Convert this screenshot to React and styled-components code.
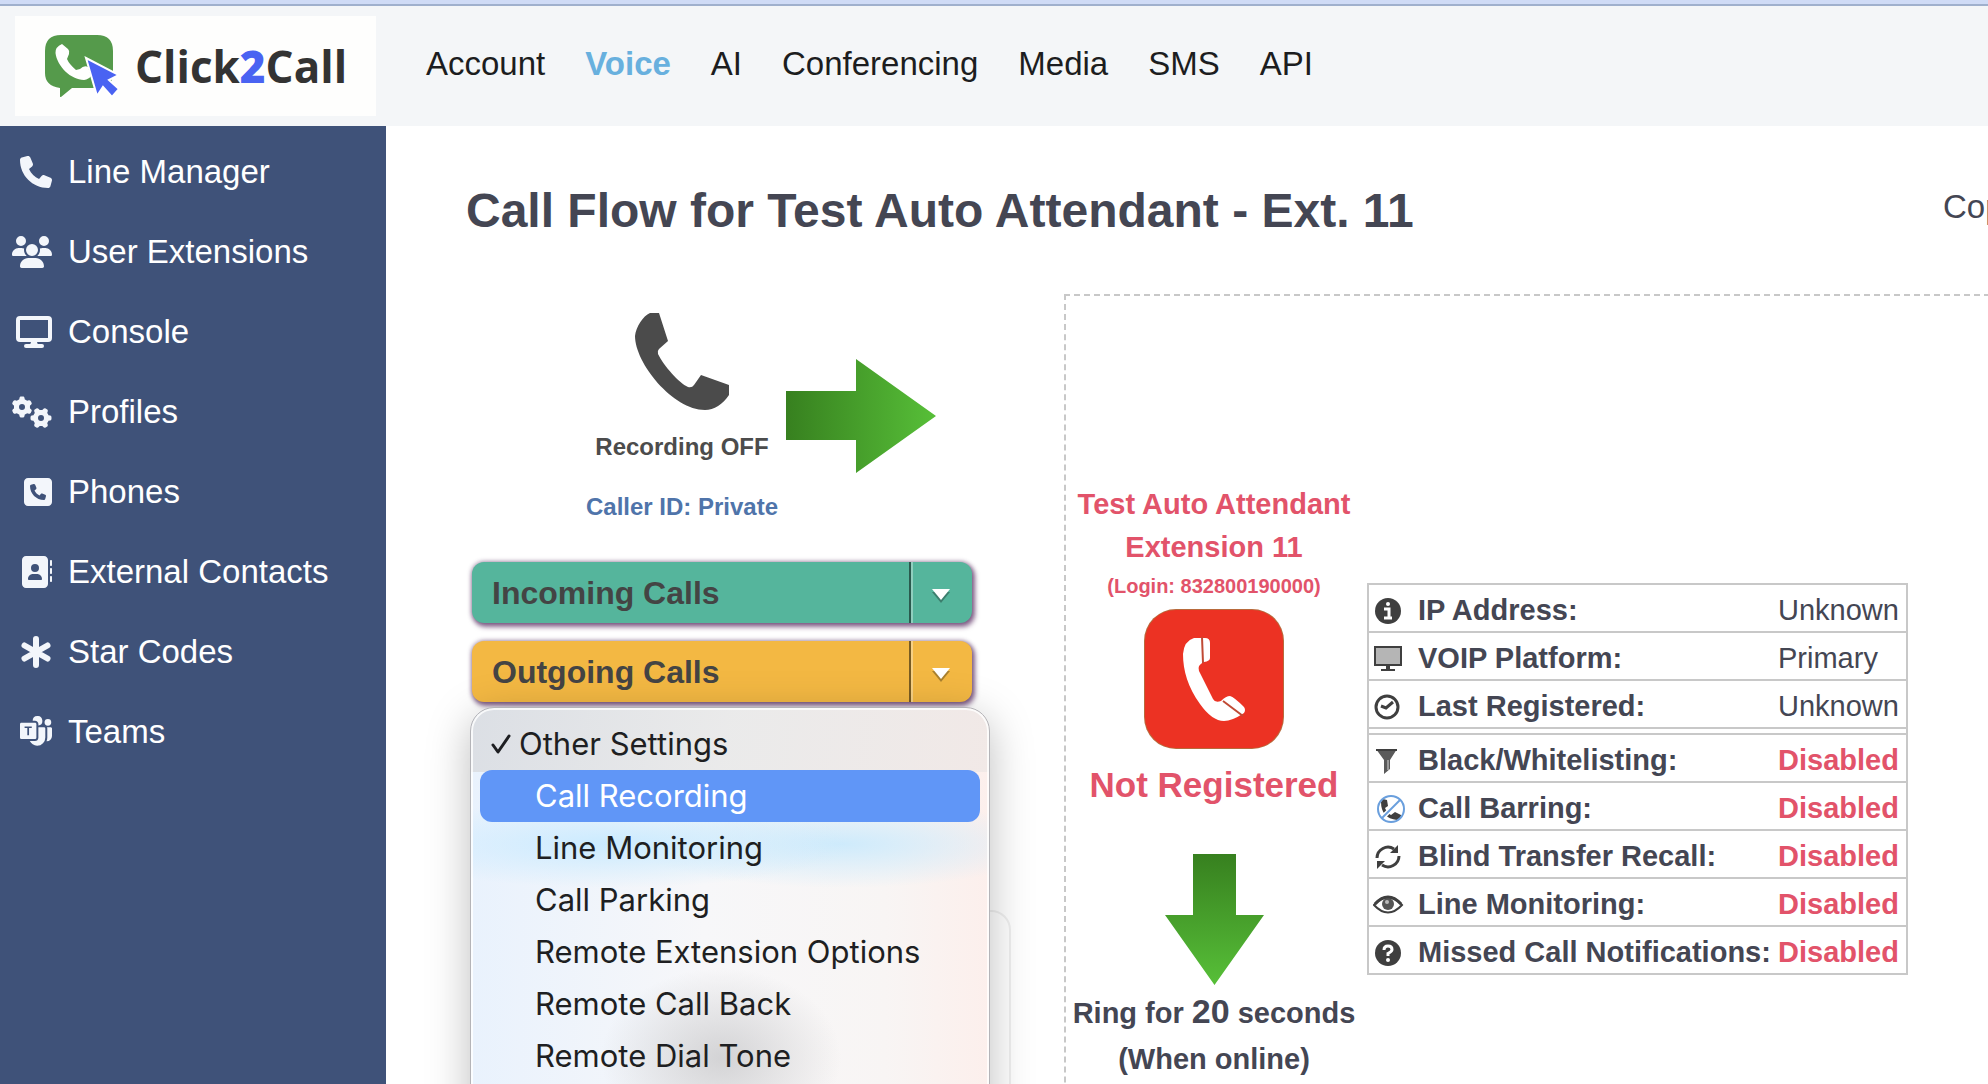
import styled, { createGlobalStyle } from "styled-components";
import {
  FaPhone,
  FaUsers,
  FaGears,
  FaSquarePhone,
  FaAddressBook,
} from "react-icons/fa6";
import { BsMicrosoftTeams } from "react-icons/bs";

const GlobalStyle = createGlobalStyle`
  * {
    box-sizing: border-box;
  }
  body {
    margin: 0;
    background: #fff;
    color: #444653;
    font-family: "Helvetica Neue", "Liberation Sans", Arial, sans-serif;
    font-size: 29px;
    line-height: 46px;
  }
`;

const Page = styled.div`
  height: 100vh;
  overflow: hidden;
  display: flex;
  flex-direction: column;
  border-top: 4px solid #cfdbf6;
`;

const Header = styled.header`
  flex: none;
  display: flex;
  align-items: center;
  height: 122px;
  padding-left: 15px;
  border-top: 2px solid #9fb0cd;
  background: #f4f6f8;
`;

const Logo = styled.a`
  display: flex;
  align-items: center;
  gap: 16px;
  width: 361px;
  height: 100px;
  padding-left: 30px;
  background: #fefefd;
  color: #333;
  font: bold 44px/50px "Open Sans", "Noto Sans", sans-serif;
  text-decoration: none;

  b {
    color: #4a63f2;
  }
`;

const TopNav = styled.nav`
  display: flex;
  gap: 40px;
  padding: 0 0 4px 50px;
`;

const TopLink = styled.a`
  color: ${({ $active }) => ($active ? "#68b0de" : "#1c1d20")};
  font-size: 33px;
  font-weight: ${({ $active }) => ($active ? "bold" : "normal")};
  text-decoration: none;
`;

const Body = styled.div`
  flex: 1;
  display: flex;
  min-height: 0;
`;

const Sidebar = styled.nav`
  flex: none;
  width: 386px;
  padding-top: 6px;
  background: #3f5279;
`;

const SideLink = styled.a`
  display: flex;
  align-items: center;
  gap: 16px;
  height: 80px;
  color: #fff;
  font-size: 33px;
  text-decoration: none;
`;

const SideIcon = styled.span`
  display: flex;
  justify-content: flex-end;
  width: 52px;
  color: #f3f6fb;

  svg {
    width: ${({ $width }) => $width}px;
    height: 32px;
  }
`;

const Main = styled.main`
  flex: none;
  width: 1634px;
  padding-left: 80px;
`;

const TitleBar = styled.div`
  display: flex;
  align-items: flex-start;
  justify-content: space-between;
  padding: 56px 0 54px;
`;

const Title = styled.h1`
  margin: 0;
  font-size: 48px;
  line-height: 58px;
`;

const CopyLink = styled.a`
  color: #444653;
  font-size: 33px;
  line-height: 50px;
  text-decoration: none;
`;

const Flow = styled.div`
  display: grid;
  grid-template-columns: 598px 1fr;
`;

const CallerColumn = styled.section`
  padding: 19px 0 0 6px;
`;

const Caller = styled.div`
  display: flex;
  align-items: flex-start;
  height: 249px;
  padding-left: 106px;
`;

const CallerInfo = styled.div`
  width: 208px;
  text-align: center;
  font-size: 24px;
  font-weight: bold;
  line-height: 34px;
  white-space: nowrap;
  color: #4c4c4c;

  svg {
    display: block;
    margin: 0 auto 20px;
  }
`;

const CallerId = styled.div`
  margin-top: 26px;
  color: #4f74aa;
`;

const CallerArrow = styled.svg`
  margin-top: 46px;
`;

const Settings = styled.div`
  position: relative;
  display: flex;
  flex-direction: column;
  gap: 18px;
  width: 500px;
`;

const SelectBox = styled.label`
  display: flex;
  height: 61px;
  border-radius: 12px;
  background: ${({ $color }) => $color};
  box-shadow: 2px 3px 5px 1px rgba(70, 20, 80, 0.6),
    0 0 4px 1px rgba(70, 30, 80, 0.35);
  position: relative;

  svg {
    position: absolute;
    right: 20px;
    top: 26px;
    pointer-events: none;
  }
`;

const Select = styled.select`
  flex: 1;
  appearance: none;
  border: 0;
  padding: 0 62px 0 20px;
  border-radius: 12px;
  color: #444;
  font: bold 32px "Liberation Sans", Arial, sans-serif;
  background: linear-gradient(
      to right,
      rgba(0, 0, 0, 0.5) 2px,
      rgba(255, 255, 255, 0.35) 2px
    )
    right 59px top / 4px 100% no-repeat;
`;

const Menu = styled.ul`
  position: absolute;
  top: 145px;
  left: -2px;
  z-index: 1;
  width: 520px;
  height: 460px;
  margin: 0;
  padding: 10px 9px;
  list-style: none;
  border: 1px solid #b4b4b8;
  border-radius: 24px;
  color: #1e1f22;
  font: 31px/52px Inter, sans-serif;
  box-shadow: inset 0 0 0 2px rgba(255, 255, 255, 0.8),
    0 10px 44px rgba(0, 0, 0, 0.26);
  background: radial-gradient(
        120px 90px at 250px 350px,
        rgba(196, 196, 198, 0.7),
        transparent
      )
      no-repeat,
    radial-gradient(
        240px 44px at 140px 136px,
        rgba(200, 234, 255, 0.95),
        transparent
      )
      no-repeat,
    radial-gradient(
        210px 44px at 370px 136px,
        rgba(204, 234, 252, 0.95),
        transparent
      )
      no-repeat,
    linear-gradient(
      100deg,
      rgba(218, 221, 226, 0.9),
      rgba(233, 233, 233, 0.9) 50%,
      rgba(240, 232, 230, 0.9)
    )
      top / 100% 64px no-repeat,
    linear-gradient(to right, #e9f2fd, #f7f7f9 45%, #f8f5f4 80%, #fcefec);
`;

const MenuItem = styled.li`
  display: flex;
  align-items: center;
  gap: 8px;
  height: 52px;
  padding-left: ${({ $checked }) => ($checked ? "11px" : "55px")};
  border-radius: 12px;
  white-space: nowrap;
  color: ${({ $active }) => ($active ? "#fff" : "inherit")};
  background: ${({ $active }) => ($active ? "#6096f7" : "none")};
`;

const Card = styled.div`
  width: 539px;
  height: 400px;
  margin-top: 208px;
  border: 2px solid #f0f0f0;
  border-radius: 20px;
`;

const Destination = styled.section`
  display: flex;
  align-items: flex-start;
  height: 1200px;
  border: 2px dashed #c8c8c8;
`;

const Device = styled.div`
  width: 301px;
  padding: 187px 5px 0 0;
  text-align: center;
  font-weight: bold;
  white-space: nowrap;
`;

const DeviceInfo = styled.div`
  color: #e2536a;
  line-height: 43px;
`;

const Login = styled.div`
  font-size: 20px;
  line-height: 34px;
`;

const DeviceIcon = styled.svg`
  display: block;
  margin: 6px auto 10px;
`;

const Status = styled.div`
  font-size: 35px;
  line-height: 52px;
`;

const DownArrow = styled.svg`
  display: block;
  margin: 43px auto 3px;
`;

const Big = styled.span`
  font-size: 34px;
`;

const Details = styled.table`
  width: 541px;
  margin-top: 287px;
  border: 2px solid #c8c8c8;
  border-collapse: collapse;

  th,
  td {
    height: 48px;
    padding: 4px 0 0;
    border-top: 2px solid #c8c8c8;
    text-align: left;
    white-space: nowrap;
    line-height: 40px;
  }
  td:first-child {
    width: 50px;
    padding-left: 4px;
  }
  svg {
    display: block;
    margin-top: 2px;
  }
`;

const Spacer = styled.tr`
  && td {
    height: 6px;
    padding: 0;
    line-height: 1px;
  }
`;

const Value = styled.td`
  width: 129px;
  color: ${({ $off }) => ($off ? "#e2536a" : "inherit")};
  font-weight: ${({ $off }) => ($off ? "bold" : "normal")};
`;

function ScreenIcon() {
  return (
    <svg viewBox="0 0 36 32" fill="none" stroke="currentColor" strokeWidth="4">
      <rect x="2" y="2" width="32" height="22" rx="2" />
      <path d="M15 26h6l1 3h-8z" fill="currentColor" stroke="none" />
      <path d="M10 30h16" strokeLinecap="round" />
    </svg>
  );
}

function StarIcon() {
  return (
    <svg
      viewBox="0 0 32 32"
      stroke="currentColor"
      strokeWidth="6"
      strokeLinecap="round"
    >
      <path d="M16 3v26M4.500 9.500l23 13M27.500 9.500l-23 13" />
    </svg>
  );
}

function LogoMark() {
  return (
    <svg width="74" height="62" viewBox="0 0 74 62">
      <path
        d="M16 0h36q16 0 16 16v22q0 15-16 15H27L16 62q-1 .5-1-1v-8Q0 51 0 38V16Q0 0 16 0z"
        fill="#559a4b"
      />
      <path
        d="M17 9q-7 3-6.500 9C12 31 26 45 39 45q5-1 7-4l-3-9q-4-2-8 2l-4 1q-7-6-9-11l2-5q1-3-1-5z"
        fill="#fff"
      />
      <path
        d="M41 23l33 17-10 5 10 9-7 8-9-10-6 9z"
        fill="#4a63f2"
        stroke="#fff"
        strokeWidth="2"
      />
    </svg>
  );
}

function Handset() {
  return (
    <svg width="94" height="97" viewBox="0 0 94 97">
      <path
        d="M15 0h9l9 28-9 8q-2 2-1 5c6 12 21 29 30 33q4 1 6-2l7-10 28 10v10c-6 9-15 15-24 15C38 97 0 50 0 23 1 14 8 3 15 0z"
        fill="#4b4b4b"
      />
    </svg>
  );
}

const ink = "#3f3f3f";

const detailIcons = {
  info: (
    <>
      <circle cx="15" cy="16" r="13" fill={ink} />
      <circle cx="15" cy="9" r="2" fill="#fff" />
      <path d="M11 14h5v8M11 23h8" stroke="#fff" strokeWidth="3" fill="none" />
    </>
  ),
  screen: (
    <>
      <rect x="2" y="4" width="26" height="18" fill="#b5b5b5" stroke={ink} strokeWidth="2" />
      <path d="M13 22h4v4h5v2H8v-2h5z" fill={ink} />
    </>
  ),
  clock: (
    <g fill="none" stroke={ink} strokeWidth="3">
      <circle cx="14" cy="16" r="11" />
      <path d="M8 15l5 2 7-6" />
    </g>
  ),
  filter: (
    <>
      <path d="M3 4h21l-7 11v9l-6 5V15z" fill="#5a5a5a" />
      <path d="M3 5h21" stroke={ink} strokeWidth="2" />
      <path d="M15 15v10" stroke="#999" strokeWidth="2" />
    </>
  ),
  barring: (
    <>
      <path
        d="M10 6l4 1 1 6-3 2q2 5 6 7l4-3 6 3q0 4-4 5Q8 25 8 9z"
        fill={ink}
      />
      <g fill="none" stroke="#fff" strokeWidth="5">
        <path d="M9 25L27 7" />
      </g>
      <g fill="none" stroke="#6a9fdd" strokeWidth="2">
        <circle cx="18" cy="16" r="13" />
        <path d="M9 25L27 7" />
      </g>
    </>
  ),
  recall: (
    <>
      <g fill="none" stroke={ink} strokeWidth="3">
        <path d="M4 17a11 11 0 0 1 17-9M26 15a11 11 0 0 1-17 9" />
      </g>
      <path d="M25 4v8h-8zM4 28v-8h8z" fill={ink} />
    </>
  ),
  eye: (
    <>
      <path
        d="M1 16Q15 0 29 16 15 31 1 16z"
        fill="#fff"
        stroke={ink}
        strokeWidth="2"
      />
      <circle cx="15" cy="15" r="6" fill="#555" />
      <circle cx="14" cy="13" r="2" fill="#bbb" />
      <path d="M2 15Q15 1 28 15" fill="none" stroke={ink} strokeWidth="3" />
    </>
  ),
  question: (
    <>
      <circle cx="15" cy="16" r="13" fill={ink} />
      <path
        d="M11 13q0-4 4-4t4 3.500q0 2-4 4V19"
        fill="none"
        stroke="#fff"
        strokeWidth="3"
      />
      <circle cx="15" cy="23" r="2" fill="#fff" />
    </>
  ),
};

const topLinks = ["Account", "Voice", "AI", "Conferencing", "Media", "SMS", "API"];

const sideLinks = [
  { label: "Line Manager", icon: <FaPhone />, width: 32 },
  { label: "User Extensions", icon: <FaUsers />, width: 40 },
  { label: "Console", icon: <ScreenIcon />, width: 36 },
  { label: "Profiles", icon: <FaGears />, width: 40 },
  { label: "Phones", icon: <FaSquarePhone />, width: 28 },
  { label: "External Contacts", icon: <FaAddressBook />, width: 32 },
  { label: "Star Codes", icon: <StarIcon />, width: 32 },
  { label: "Teams", icon: <BsMicrosoftTeams />, width: 32 },
];

const menuItems = [
  "Other Settings",
  "Call Recording",
  "Line Monitoring",
  "Call Parking",
  "Remote Extension Options",
  "Remote Call Back",
  "Remote Dial Tone",
];

const lineDetails = [
  { icon: "info", label: "IP Address:", value: "Unknown" },
  { icon: "screen", label: "VOIP Platform:", value: "Primary" },
  { icon: "clock", label: "Last Registered:", value: "Unknown" },
];

const featureDetails = [
  { icon: "filter", label: "Black/Whitelisting:" },
  { icon: "barring", label: "Call Barring:" },
  { icon: "recall", label: "Blind Transfer Recall:" },
  { icon: "eye", label: "Line Monitoring:" },
  { icon: "question", label: "Missed Call Notifications:" },
];

function CallSelect({ label, color }) {
  return (
    <SelectBox $color={color}>
      <Select aria-label={label} defaultValue={label}>
        <option>{label}</option>
      </Select>
      <svg width="22" height="16" viewBox="0 0 22 16">
        <path d="M2 4h18l-9 11z" fill="rgba(0,0,0,0.3)" />
        <path d="M2 1h18l-9 11z" fill="#fff" />
      </svg>
    </SelectBox>
  );
}

function DetailRow({ icon, label, value }) {
  return (
    <tr>
      <td>
        <svg width="32" height="32" viewBox="0 0 32 32" aria-hidden="true">
          {detailIcons[icon]}
        </svg>
      </td>
      <th scope="row">{label}</th>
      <Value $off={!value}>{value || "Disabled"}</Value>
    </tr>
  );
}

function App() {
  return (
    <Page>
      <GlobalStyle />
      <Header>
        <Logo href="#">
          <LogoMark />
          <span>
            Click<b>2</b>Call
          </span>
        </Logo>
        <TopNav>
          {topLinks.map((link) => (
            <TopLink key={link} href="#" $active={link === "Voice"}>
              {link}
            </TopLink>
          ))}
        </TopNav>
      </Header>
      <Body>
        <Sidebar>
          {sideLinks.map(({ label, icon, width }) => (
            <SideLink key={label} href="#">
              <SideIcon $width={width}>{icon}</SideIcon>
              {label}
            </SideLink>
          ))}
        </Sidebar>
        <Main>
          <TitleBar>
            <Title>Call Flow for Test Auto Attendant - Ext. 11</Title>
            <CopyLink href="#">Copy</CopyLink>
          </TitleBar>
          <Flow>
            <CallerColumn>
              <Caller>
                <CallerInfo>
                  <Handset />
                  Recording OFF
                  <CallerId>Caller ID: Private</CallerId>
                </CallerInfo>
                <CallerArrow width="150" height="114" viewBox="0 0 150 114">
                  <defs>
                    <linearGradient id="right">
                      <stop offset="0" stopColor="#37801f" />
                      <stop offset="1" stopColor="#57bf38" />
                    </linearGradient>
                  </defs>
                  <path d="M0 32h70V0l80 57-80 57V81H0z" fill="url(#right)" />
                </CallerArrow>
              </Caller>
              <Settings>
                <CallSelect label="Incoming Calls" color="#55b59c" />
                <CallSelect label="Outgoing Calls" color="#f3b843" />
                <Menu role="listbox" aria-label="Other Settings">
                  {menuItems.map((item, i) => (
                    <MenuItem
                      key={item}
                      role="option"
                      aria-selected={i === 0}
                      $checked={i === 0}
                      $active={i === 1}
                    >
                      {i === 0 && (
                        <svg width="20" height="22" viewBox="0 0 20 22">
                          <path
                            d="M2 12l5 7L18 3"
                            fill="none"
                            stroke="currentColor"
                            strokeWidth="3"
                            strokeLinecap="round"
                            strokeLinejoin="round"
                          />
                        </svg>
                      )}
                      {item}
                    </MenuItem>
                  ))}
                </Menu>
              </Settings>
              <Card />
            </CallerColumn>
            <Destination>
              <Device>
                <DeviceInfo>
                  <div>Test Auto Attendant</div>
                  <div>Extension 11</div>
                  <Login>(Login: 832800190000)</Login>
                  <DeviceIcon width="140" height="140" viewBox="0 0 140 140">
                    <rect width="140" height="140" rx="32" fill="#b86a3c" />
                    <rect x="1" y="1" width="138" height="138" rx="31" fill="#ec3223" />
                    <path
                      d="M50 29h11q5 0 5 5v15q0 3-6 4-7 3-5 9l14 28q2 4 8 2 5-5 9-5 4 1 14 11 2 3 0 6-12 8-20 8-12 0-24-17C44 78 39 62 39 45q1-13 11-16z"
                      fill="#fff"
                    />
                    <path
                      d="M58 28l1 26M79 92l20 15"
                      stroke="#c04a35"
                      strokeWidth="2"
                    />
                  </DeviceIcon>
                  <Status>Not Registered</Status>
                </DeviceInfo>
                <DownArrow width="99" height="131" viewBox="0 0 99 131">
                  <defs>
                    <linearGradient id="down" x1="0" y1="0" x2="0" y2="1">
                      <stop offset="0" stopColor="#37801f" />
                      <stop offset="1" stopColor="#57bf38" />
                    </linearGradient>
                  </defs>
                  <path d="M28 0h43v61h28l-49.500 70L0 61h28z" fill="url(#down)" />
                </DownArrow>
                <div>
                  Ring for <Big>20</Big> seconds
                </div>
                <div>(When online)</div>
              </Device>
              <Details>
                <tbody>
                  {lineDetails.map((row) => (
                    <DetailRow key={row.label} {...row} />
                  ))}
                  <Spacer>
                    <td colSpan={3} />
                  </Spacer>
                  {featureDetails.map((row) => (
                    <DetailRow key={row.label} {...row} />
                  ))}
                </tbody>
              </Details>
            </Destination>
          </Flow>
        </Main>
      </Body>
    </Page>
  );
}

export default App;
